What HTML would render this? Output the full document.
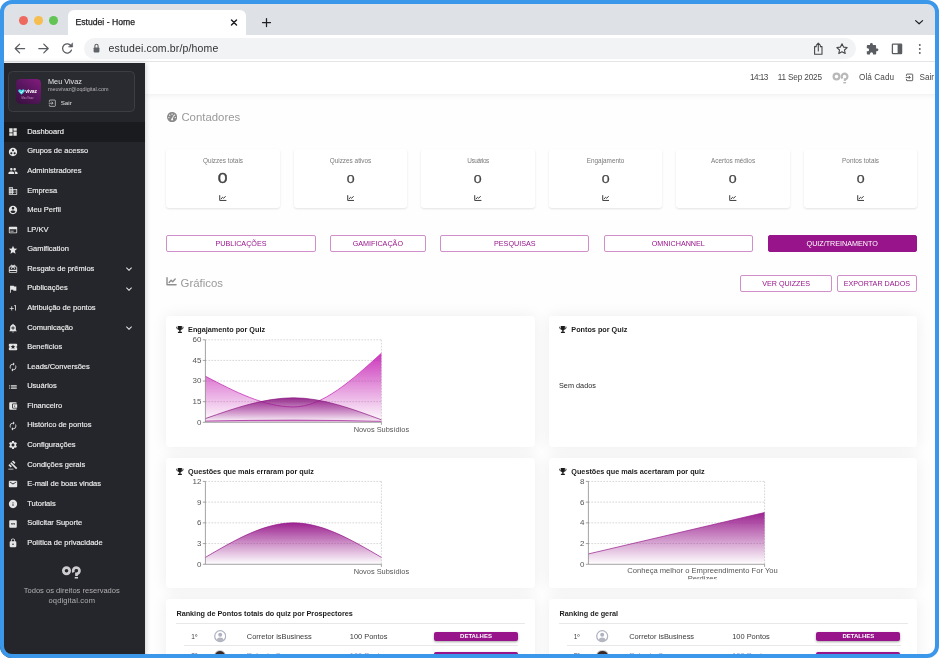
<!DOCTYPE html>
<html lang="pt-BR">
<head>
<meta charset="utf-8">
<title>Estudei - Home</title>
<style>
html,body{margin:0;padding:0;background:#fff;}
body{width:940px;height:658px;overflow:hidden;position:relative;font-family:"Liberation Sans",sans-serif;color:#333;-webkit-font-smoothing:antialiased;}
*{box-sizing:border-box;}
.abs{position:absolute;}
#clip{position:absolute;left:0;top:0;width:939px;height:658px;border-radius:12px;overflow:hidden;background:#fff;will-change:transform;}
#frame{position:absolute;left:0;top:0;width:939px;height:658px;border:4px solid #3b97e9;border-radius:12px;z-index:50;pointer-events:none;}
/* browser chrome */
#tabbar{position:absolute;left:0;top:0;width:939px;height:35px;background:#dee1e6;}
.tl{position:absolute;top:16px;width:9px;height:9px;border-radius:50%;}
#tab{position:absolute;left:68px;top:10px;width:178px;height:25px;background:#fff;border-radius:6px 6px 0 0;}
#tab .t{position:absolute;left:7.5px;top:6.6px;font-size:8.65px;color:#202124;letter-spacing:0;white-space:nowrap;-webkit-text-stroke:0.25px #202124;}
#toolbar{position:absolute;left:0;top:35px;width:939px;height:27px;background:#fff;border-bottom:1px solid #e3e5e8;}
#pill{position:absolute;left:84px;top:3px;width:772px;height:21px;border-radius:11px;background:#f1f3f4;}
#url{position:absolute;left:24.5px;top:4.4px;font-size:10.5px;color:#303134;white-space:nowrap;letter-spacing:0.15px;}
/* sidebar */
#side{position:absolute;left:0;top:63px;width:144.5px;height:600px;background:#25262b;}
#main{position:absolute;left:144.5px;top:63px;width:795px;height:600px;background:#fefefe;overflow:hidden;}
/*SIDE*/
#pcard{position:absolute;left:8px;top:8px;width:126.500px;height:41px;border:1px solid #3d3e44;border-radius:4.500px;background:#2a2b31;}
#avatar{position:absolute;left:6.500px;top:6.500px;width:25.500px;height:25.500px;border-radius:4.500px;background:linear-gradient(35deg,#3c1242 10%,#5a1660 55%,#861b80 100%);overflow:hidden;}
#avatar .vz{position:absolute;left:9.700px;top:9.300px;font-size:5px;line-height:6px;color:#fff;font-weight:bold;letter-spacing:-0.100px;}
#avatar .vz2{position:absolute;left:6px;top:18.500px;font-size:2.600px;line-height:3px;color:#d78fd0;white-space:nowrap;}
#pcard .pn{position:absolute;left:39px;top:4.500px;font-size:7.300px;line-height:9px;color:#e6e6e6;white-space:nowrap;}
#pcard .pe{position:absolute;left:39px;top:13.700px;font-size:5.450px;line-height:7px;color:#b4b4b8;white-space:nowrap;}
#pcard .ps{position:absolute;left:51.700px;top:26.600px;font-size:6.200px;line-height:8px;color:#e0e0e0;white-space:nowrap;}
.mi{position:absolute;left:4px;width:140.500px;height:19.570px;}
.mi.act{background:#1a1b1f;}
.mi .ic{position:absolute;left:3.600px;top:5.200px;}
.mi span{position:absolute;left:23.200px;top:4.900px;font-size:7.500px;line-height:9px;color:#ededed;white-space:nowrap;-webkit-text-stroke:0.150px #ededed;}
.mi .chev{position:absolute;left:118.500px;top:4.200px;}
.ft{position:absolute;left:4px;width:135.500px;text-align:center;font-size:7.550px;line-height:10px;color:#b0b0b3;white-space:nowrap;}
/*ENDSIDE*/
/*MAIN*/
#side{z-index:5;box-shadow:1px 0 5px rgba(0,0,0,0.180);}
#mi{position:absolute;left:-144.500px;top:-63px;width:940px;height:700px;}
#hdr{position:absolute;left:144.500px;top:63px;width:800px;height:30.800px;background:#fff;box-shadow:0 1px 6px rgba(0,0,0,0.070);}
.ht{position:absolute;top:72.500px;font-size:8.200px;line-height:9px;color:#484848;white-space:nowrap;}
.h2{position:absolute;font-size:11.400px;line-height:14px;color:#9a9a9a;white-space:nowrap;}
.cc{position:absolute;top:148.500px;width:113.200px;height:59.600px;background:#fff;border-radius:3px;box-shadow:0 1px 2.200px rgba(0,0,0,0.110);}
.cl{position:absolute;left:0;width:100%;top:8.200px;text-align:center;font-size:6.400px;line-height:8px;color:#7a7a7a;white-space:nowrap;}
.cv{position:absolute;left:0;width:100%;top:23.300px;text-align:center;font-size:11.600px;line-height:14px;color:#444;transform:scaleX(1.220);-webkit-text-stroke:0.250px #444;}
.cv.big{font-size:14.400px;top:22.300px;-webkit-text-stroke:0.400px #444;}
.bt{position:absolute;border:1px solid #d08fc9;border-radius:2px;background:#fff;color:#98148a;font-size:7.200px;text-align:center;line-height:15px;white-space:nowrap;}
.bt.fill{background:#98148a;border-color:#98148a;color:#fff;}
.card{position:absolute;background:#fff;border-radius:4px;box-shadow:0 0 16px rgba(0,0,0,0.072);}
.ct{position:absolute;font-size:7.250px;line-height:9px;font-weight:bold;color:#1c1c1c;white-space:nowrap;}
.sd{position:absolute;font-size:7.300px;line-height:9px;color:#2a2a2a;white-space:nowrap;}
.tk{font-size:6.800px;fill:#555;font-family:"Liberation Sans",sans-serif;}
.xl{font-size:7.400px;fill:#555;font-family:"Liberation Sans",sans-serif;}
.hr{position:absolute;height:0.800px;background:#e8e8e8;}
.rt{position:absolute;font-size:7.450px;line-height:9px;color:#3a3a3a;white-space:nowrap;}
.db{position:absolute;width:84px;height:9.200px;border-radius:2px;background:#98148a;color:#fff;font-size:6px;font-weight:bold;line-height:9.200px;text-align:center;box-shadow:0 1px 2.500px rgba(0,0,0,0.350);}
/*ENDMAIN*/
</style>
</head>
<body>
<div id="clip">
  <div id="tabbar">
    <div class="tl" style="left:18.8px;background:#ee6a5f;"></div>
    <div class="tl" style="left:33.8px;background:#f5be4f;"></div>
    <div class="tl" style="left:48.6px;background:#61c454;"></div>
    <div id="tab"><span class="t">Estudei - Home</span></div>
  </div>
  <div id="toolbar">
    <div id="pill"><span id="url">estudei.com.br/p/home</span></div>
  </div>

  <svg class="abs" style="left:0;top:0;" width="939" height="63" viewBox="0 0 939 63" fill="none" stroke="#45474a" stroke-width="1.25" stroke-linecap="round" stroke-linejoin="round">
    <!-- tab close, new tab, chevron -->
    <path d="M231.500 20.100l5 5M236.500 20.100l-5 5" stroke="#202124" stroke-width="1.450"/>
    <path d="M262.500 22.600h8M266.500 18.600v8" stroke="#202124" stroke-width="1.250"/>
    <path d="M915.6 20.6l3.5 3.2 3.5-3.2" stroke="#202124" stroke-width="1.2"/>
    <!-- back / forward -->
    <path d="M24.6 48.5H15.4M19.6 44.1l-4.4 4.400 4.400 4.400" stroke="#5a5d61"/>
    <path d="M38.800 48.500h9.200M43.800 44.100l4.400 4.400-4.400 4.400" stroke="#5a5d61"/>
    <!-- reload -->
    <path d="M71.2 46.2a4.6 4.6 0 1 0 .3 3.9" stroke="#5a5d61" stroke-width="1.3"/>
    <path d="M72.6 43.2v3.8h-3.8z" fill="#5a5d61" stroke="#5a5d61" stroke-width="0.6"/>
    <!-- lock -->
    <rect x="93.6" y="47.4" width="5.8" height="5" rx="0.8" fill="#5f6368" stroke="none"/>
    <path d="M94.9 47.4v-1.5a1.6 1.6 0 0 1 3.2 0v1.5" stroke="#5f6368" stroke-width="1.1"/>
    <!-- share -->
    <path d="M816.3 46.6h-1.7v7.6h7.4v-7.6h-1.7M818.3 51v-7.6M816.2 45.4l2.1-2.2 2.1 2.2" stroke="#45474a" stroke-width="1.1"/>
    <!-- star -->
    <path d="M842 43.8l1.55 3.3 3.6.45-2.65 2.45.7 3.55-3.2-1.8-3.2 1.8.7-3.55-2.65-2.45 3.6-.45z" stroke="#45474a" stroke-width="1.1"/>
    <!-- puzzle -->
    <path d="M876.9 48.4h-.8v-2.2c0-.6-.5-1.1-1.1-1.1h-2.2v-.8a1.4 1.4 0 0 0-2.8 0v.8h-2.1c-.6 0-1.1.5-1.1 1.1v2.1h.8a1.5 1.5 0 0 1 0 3h-.8v2.1c0 .6.5 1.1 1.1 1.1h2.1v-.8a1.5 1.5 0 0 1 3 0v.8h2.1c.6 0 1.1-.5 1.1-1.1v-2.2h.8a1.4 1.4 0 0 0 0-2.8z" fill="#5a5d61" stroke="none"/>
    <!-- side panel -->
    <rect x="892.4" y="44.2" width="9.2" height="9.4" rx="0.6" stroke="#5a5d61" stroke-width="1.3"/>
    <rect x="897.6" y="44.2" width="4" height="9.4" fill="#5a5d61" stroke="none"/>
    <!-- menu dots -->
    <g fill="#5a5d61" stroke="none"><circle cx="919.8" cy="45" r="0.95"/><circle cx="919.8" cy="49" r="0.95"/><circle cx="919.8" cy="53" r="0.95"/></g>
  </svg>
  <div id="side">
    <div id="pcard">
      <div id="avatar">
        <svg class="abs" style="left:2px;top:10.5px" width="7" height="6" viewBox="0 0 14 12"><path d="M7 11.500L1.200 5.600A3.100 3.100 0 0 1 5.600 1.300L7 2.700l1.400-1.400a3.100 3.100 0 0 1 4.400 4.300z" fill="#3fd6e6"/><path d="M4 5.200l2.500 2.600L10.700 3" stroke="#fff" stroke-width="1.600" fill="none"/></svg>
        <span class="vz">vivaz</span><span class="vz2">Meu Vivaz</span>
      </div>
      <span class="pn">Meu Vivaz</span>
      <span class="pe">meuvivaz@oqdigital.com</span>
      <svg class="abs" style="left:38.700px;top:26.500px" width="8.400" height="8.400" viewBox="0 0 24 24" fill="none" stroke="#dcdcdc" stroke-width="2"><path d="M4 8V4.500C4 3.700 4.700 3 5.500 3h14c.8 0 1.500.7 1.500 1.500v15c0 .8-.7 1.500-1.500 1.500h-14C4.700 21 4 20.300 4 19.500V16"/><path d="M2 12h12M10.500 8l4 4-4 4"/></svg>
      <span class="ps">Sair</span>
    </div>
    <div class="mi act" style="top:59.00px"><svg class="ic" width="10" height="10" viewBox="0 0 24 24" fill="#e6e6e6"><path d="M3 13h8V3H3v10zm0 8h8v-6H3v6zm10 0h8V11h-8v10zm0-18v6h8V3h-8z"/></svg><span>Dashboard</span></div>
    <div class="mi" style="top:78.57px"><svg class="ic" width="10" height="10" viewBox="0 0 24 24" fill="#e6e6e6"><path d="M12 2C6.48 2 2 6.48 2 12s4.48 10 10 10 10-4.48 10-10S17.52 2 12 2zM8 17.5c-1.38 0-2.5-1.12-2.5-2.5s1.12-2.5 2.5-2.5 2.5 1.12 2.5 2.5-1.12 2.5-2.5 2.5zM9.500 8c0-1.380 1.120-2.500 2.500-2.500s2.500 1.120 2.500 2.500-1.120 2.500-2.500 2.500S9.500 9.380 9.500 8zm6.500 9.500c-1.380 0-2.500-1.120-2.500-2.500s1.120-2.500 2.500-2.500 2.500 1.120 2.500 2.500-1.120 2.500-2.500 2.500z"/></svg><span>Grupos de acesso</span></div>
    <div class="mi" style="top:98.14px"><svg class="ic" width="10" height="10" viewBox="0 0 24 24" fill="#e6e6e6"><path d="M16 11c1.660 0 2.990-1.340 2.990-3S17.660 5 16 5c-1.660 0-3 1.340-3 3s1.340 3 3 3zm-8 0c1.660 0 2.990-1.340 2.990-3S9.660 5 8 5C6.340 5 5 6.340 5 8s1.340 3 3 3zm0 2c-2.330 0-7 1.170-7 3.500V19h14v-2.500c0-2.330-4.670-3.500-7-3.500zm8 0c-.29 0-.62.02-.97.05 1.160.84 1.970 1.970 1.970 3.450V19h6v-2.500c0-2.330-4.670-3.500-7-3.500z"/></svg><span>Administradores</span></div>
    <div class="mi" style="top:117.71px"><svg class="ic" width="10" height="10" viewBox="0 0 24 24" fill="#e6e6e6"><path d="M12 7V3H2v18h20V7H12zM6 19H4v-2h2v2zm0-4H4v-2h2v2zm0-4H4V9h2v2zm0-4H4V5h2v2zm4 12H8v-2h2v2zm0-4H8v-2h2v2zm0-4H8V9h2v2zm0-4H8V5h2v2zm10 12h-8v-2h2v-2h-2v-2h2v-2h-2V9h8v10zm-2-8h-2v2h2v-2zm0 4h-2v2h2v-2z"/></svg><span>Empresa</span></div>
    <div class="mi" style="top:137.28px"><svg class="ic" width="10" height="10" viewBox="0 0 24 24" fill="#e6e6e6"><path d="M12 2C6.48 2 2 6.48 2 12s4.48 10 10 10 10-4.48 10-10S17.52 2 12 2zm0 3c1.660 0 3 1.340 3 3s-1.340 3-3 3-3-1.340-3-3 1.340-3 3-3zm0 14.200c-2.500 0-4.710-1.280-6-3.220.03-1.990 4-3.080 6-3.080 1.990 0 5.970 1.090 6 3.080-1.290 1.940-3.500 3.220-6 3.220z"/></svg><span>Meu Perfil</span></div>
    <div class="mi" style="top:156.85px"><svg class="ic" width="10" height="10" viewBox="0 0 24 24" fill="#e6e6e6"><path d="M20 4H4c-1.100 0-2 .9-2 2v12c0 1.100.9 2 2 2h16c1.100 0 2-.9 2-2V6c0-1.100-.9-2-2-2zm0 14H4v-8h16v8zM5.500 13.800h8v2h-8z"/></svg><span>LP/KV</span></div>
    <div class="mi" style="top:176.42px"><svg class="ic" width="10" height="10" viewBox="0 0 24 24" fill="#e6e6e6"><path d="M12 17.270L18.180 21l-1.640-7.030L22 9.240l-7.190-.61L12 2 9.190 8.630 2 9.240l5.460 4.730L5.820 21z"/></svg><span>Gamification</span></div>
    <div class="mi" style="top:195.99px"><svg class="ic" width="10" height="10" viewBox="0 0 24 24" fill="#e6e6e6"><path d="M20 6h-2.180c.11-.31.18-.65.18-1 0-1.660-1.340-3-3-3-1.050 0-1.960.54-2.500 1.350l-.5.67-.5-.68C10.960 2.540 10.050 2 9 2 7.340 2 6 3.340 6 5c0 .35.07.69.18 1H4c-1.110 0-1.990.89-1.990 2L2 19c0 1.110.89 2 2 2h16c1.110 0 2-.89 2-2V8c0-1.110-.89-2-2-2zm-5-2c.55 0 1 .45 1 1s-.45 1-1 1-1-.45-1-1 .45-1 1-1zM9 4c.55 0 1 .45 1 1s-.45 1-1 1-1-.45-1-1 .45-1 1-1zm11 15H4v-2h16v2zm0-5H4V8h5.080L7 10.830 8.620 12 11 8.760l1-1.360 1 1.360L15.380 12 17 10.830 14.920 8H20v6z"/></svg><span>Resgate de prêmios</span><svg class="chev" width="12" height="12" viewBox="0 0 24 24"><path d="M16.590 8.590L12 13.170 7.410 8.590 6 10l6 6 6-6z" fill="#e4e4e4"/></svg></div>
    <div class="mi" style="top:215.56px"><svg class="ic" width="10" height="10" viewBox="0 0 24 24" fill="#e6e6e6"><path d="M14.400 6L14 4H5v17h2v-7h5.600l.4 2h7V6z"/></svg><span>Publicações</span><svg class="chev" width="12" height="12" viewBox="0 0 24 24"><path d="M16.590 8.590L12 13.170 7.410 8.590 6 10l6 6 6-6z" fill="#e4e4e4"/></svg></div>
    <div class="mi" style="top:235.13px"><svg class="ic" width="10" height="10" viewBox="0 0 24 24" fill="#e6e6e6"><path d="M10 8H8v4H4v2h4v4h2v-4h4v-2h-4zm4.500-1.920V7.900l2.500-.5V18h2V5z"/></svg><span>Atribuição de pontos</span></div>
    <div class="mi" style="top:254.70px"><svg class="ic" width="10" height="10" viewBox="0 0 24 24" fill="#e6e6e6"><path d="M10.010 21.010c0 1.100.89 1.990 1.990 1.990s1.990-.89 1.990-1.990h-3.980zm8.870-4.190V11c0-3.250-2.250-5.970-5.290-6.690v-.72C13.590 2.710 12.880 2 12 2s-1.590.71-1.590 1.590v.72C7.370 5.030 5.120 7.750 5.120 11v5.820L3 18.940V20h18v-1.060l-2.120-2.120zM16 13.010h-3v3h-2v-3H8V11h3V8h2v3h3v2.010z"/></svg><span>Comunicação</span><svg class="chev" width="12" height="12" viewBox="0 0 24 24"><path d="M16.590 8.590L12 13.170 7.410 8.590 6 10l6 6 6-6z" fill="#e4e4e4"/></svg></div>
    <div class="mi" style="top:274.27px"><svg class="ic" width="10" height="10" viewBox="0 0 24 24" fill="#e6e6e6"><path d="M20 12c0-1.100.9-2 2-2V6c0-1.100-.9-2-2-2H4c-1.100 0-1.990.9-1.990 2v4c1.100 0 1.990.9 1.990 2s-.89 2-2 2v4c0 1.100.9 2 2 2h16c1.100 0 2-.9 2-2v-4c-1.100 0-2-.9-2-2zm-4.420 4.800L12 14.500l-3.580 2.300 1.080-4.120-3.290-2.690 4.240-.25L12 5.800l1.540 3.950 4.240.25-3.290 2.690 1.090 4.110z"/></svg><span>Benefícios</span></div>
    <div class="mi" style="top:293.84px"><svg class="ic" width="10" height="10" viewBox="0 0 24 24" fill="#e6e6e6"><path d="M12 6v3l4-4-4-4v3c-4.420 0-8 3.580-8 8 0 1.570.46 3.030 1.240 4.260L6.700 14.800c-.45-.83-.7-1.790-.7-2.800 0-3.310 2.690-6 6-6zm6.760 1.740L17.300 9.200c.44.84.7 1.790.7 2.800 0 3.310-2.690 6-6 6v-3l-4 4 4 4v-3c4.420 0 8-3.580 8-8 0-1.570-.46-3.030-1.240-4.260z"/></svg><span>Leads/Conversões</span></div>
    <div class="mi" style="top:313.41px"><svg class="ic" width="10" height="10" viewBox="0 0 24 24" fill="#e6e6e6"><path d="M3 13h2v-2H3v2zm0 4h2v-2H3v2zm0-8h2V7H3v2zm4 4h14v-2H7v2zm0 4h14v-2H7v2zM7 7v2h14V7H7z"/></svg><span>Usuários</span></div>
    <div class="mi" style="top:332.98px"><svg class="ic" width="10" height="10" viewBox="0 0 24 24" fill="#e6e6e6"><path d="M21 18v1c0 1.100-.9 2-2 2H5c-1.110 0-2-.9-2-2V5c0-1.100.89-2 2-2h14c1.100 0 2 .9 2 2v1h-9c-1.110 0-2 .9-2 2v8c0 1.100.89 2 2 2h9zm-9-2h10V8H12v8zm4-2.500c-.83 0-1.500-.67-1.500-1.500s.67-1.500 1.500-1.500 1.500.67 1.500 1.500-.67 1.500-1.500 1.500z"/></svg><span>Financeiro</span></div>
    <div class="mi" style="top:352.55px"><svg class="ic" width="10" height="10" viewBox="0 0 24 24" fill="#e6e6e6"><path d="M12 6v3l4-4-4-4v3c-4.420 0-8 3.580-8 8 0 1.570.46 3.030 1.240 4.260L6.700 14.800c-.45-.83-.7-1.790-.7-2.800 0-3.310 2.690-6 6-6zm6.760 1.740L17.300 9.200c.44.84.7 1.790.7 2.800 0 3.310-2.690 6-6 6v-3l-4 4 4 4v-3c4.420 0 8-3.580 8-8 0-1.570-.46-3.030-1.240-4.260z"/></svg><span>Histórico de pontos</span></div>
    <div class="mi" style="top:372.12px"><svg class="ic" width="10" height="10" viewBox="0 0 24 24" fill="#e6e6e6"><path d="M19.140 12.940c.04-.3.06-.61.06-.94 0-.32-.02-.64-.07-.94l2.030-1.580c.18-.14.23-.41.12-.61l-1.920-3.320c-.12-.22-.37-.29-.59-.22l-2.390.96c-.5-.38-1.030-.7-1.620-.94l-.36-2.540c-.04-.24-.24-.41-.48-.41h-3.840c-.24 0-.43.17-.47.41l-.36 2.540c-.59.24-1.130.57-1.620.94l-2.390-.96c-.22-.08-.47 0-.59.22L2.740 8.870c-.12.21-.08.47.12.61l2.030 1.580c-.05.3-.09.63-.09.94s.02.64.07.94l-2.030 1.580c-.18.14-.23.41-.12.61l1.920 3.320c.12.22.37.29.59.22l2.390-.96c.5.38 1.030.7 1.620.94l.36 2.540c.05.24.24.41.48.41h3.840c.24 0 .44-.17.47-.41l.36-2.540c.59-.24 1.130-.56 1.620-.94l2.390.96c.22.08.47 0 .59-.22l1.920-3.320c.12-.22.07-.47-.12-.61l-2.010-1.580zM12 15.600c-1.980 0-3.600-1.620-3.600-3.600s1.620-3.600 3.600-3.600 3.600 1.620 3.600 3.600-1.620 3.600-3.600 3.600z"/></svg><span>Configurações</span></div>
    <div class="mi" style="top:391.69px"><svg class="ic" width="10" height="10" viewBox="0 0 24 24" fill="#e6e6e6"><path d="M1 21h12v2H1zM5.245 8.070l2.830-2.827 14.140 14.142-2.828 2.828zM12.317 1l5.657 5.656-2.830 2.830-5.654-5.660zM3.825 9.485l5.657 5.657-2.828 2.828-5.657-5.657z"/></svg><span>Condições gerais</span></div>
    <div class="mi" style="top:411.26px"><svg class="ic" width="10" height="10" viewBox="0 0 24 24" fill="#e6e6e6"><path d="M20 4H4c-1.100 0-1.990.9-1.990 2L2 18c0 1.100.9 2 2 2h16c1.100 0 2-.9 2-2V6c0-1.100-.9-2-2-2zm0 4l-8 5-8-5V6l8 5 8-5v2z"/></svg><span>E-mail de boas vindas</span></div>
    <div class="mi" style="top:430.83px"><svg class="ic" width="10" height="10" viewBox="0 0 24 24" fill="#e6e6e6"><path d="M12 2C6.480 2 2 6.480 2 12s4.480 10 10 10 10-4.480 10-10S17.520 2 12 2zm1 15h-2v-6h2v6zm0-8h-2V7h2v2z"/></svg><span>Tutoriais</span></div>
    <div class="mi" style="top:450.40px"><svg class="ic" width="10" height="10" viewBox="0 0 24 24" fill="#e6e6e6"><path d="M19 3H5c-1.100 0-2 .9-2 2v14c0 1.100.9 2 2 2h14c1.100 0 2-.9 2-2V5c0-1.100-.9-2-2-2zM11 14.500H8.500l1-2H8v-3h3v3l-1 2zm5 0h-2.500l1-2H13v-3h3v3l-1 2z"/></svg><span>Solicitar Suporte</span></div>
    <div class="mi" style="top:469.97px"><svg class="ic" width="10" height="10" viewBox="0 0 24 24" fill="#e6e6e6"><path d="M18 8h-1V6c0-2.760-2.240-5-5-5S7 3.240 7 6v2H6c-1.100 0-2 .9-2 2v10c0 1.100.9 2 2 2h12c1.100 0 2-.9 2-2V10c0-1.100-.9-2-2-2zm-6 9c-1.100 0-2-.9-2-2s.9-2 2-2 2 .9 2 2-.9 2-2 2zm3.100-9H8.900V6c0-1.710 1.390-3.100 3.100-3.100 1.710 0 3.100 1.390 3.100 3.100v2z"/></svg><span>Política de privacidade</span></div>
    <svg class="abs" style="left:58px;top:500px" width="28" height="20" viewBox="58 563 28 20" fill="none" stroke="#cdcdcf" stroke-width="2.700"><circle cx="66.500" cy="570.700" r="3.150"/><path d="M73.600 572.300A3.150 3.150 0 1 1 76.500 573.850V576" stroke-linecap="butt"/><path d="M74.700 577.750h3.300" stroke-width="1.600"/></svg>
    <div class="ft" style="top:523px">Todos os direitos reservados</div>
    <div class="ft" style="top:533px;letter-spacing:0.17px">oqdigital.com</div>
  </div>
  <div id="main"><div id="mi">
  <div id="hdr"></div>
  <span class="ht" style="left:750px;letter-spacing:-0.560px">14:13</span>
  <span class="ht" style="left:777.700px;letter-spacing:-0.150px">11 Sep 2025</span>
  <svg class="abs" style="left:831px;top:71px" width="19" height="13" viewBox="831 71 19 13" fill="none" stroke="#b9b9b9" stroke-width="2.200"><circle cx="836.500" cy="76.600" r="2.900"/><path d="M842.500 78.450A2.850 2.850 0 1 1 844.900 79.350V81" /><path d="M843.200 82.700h2.900" stroke-width="1.400"/></svg>
  <span class="ht" style="left:859px;letter-spacing:0.080px">Olá Cadu</span>
  <svg class="abs" style="left:905px;top:73.100px" width="8.800" height="8.800" viewBox="0 0 24 24" fill="none" stroke="#444" stroke-width="2.300"><path d="M4 8V4.500C4 3.700 4.700 3 5.500 3h14c.8 0 1.500.7 1.500 1.500v15c0 .8-.7 1.500-1.500 1.500h-14C4.700 21 4 20.300 4 19.500V16"/><path d="M2 12h12M10.500 8l4 4-4 4"/></svg>
  <span class="ht" style="left:919.400px;letter-spacing:0.050px">Sair</span>
  <svg class="abs" style="left:166.500px;top:112px" width="10.200" height="10.200" viewBox="0 0 20 20"><circle cx="10" cy="10" r="10" fill="#8a8a8a"/><g fill="#fbfbfb"><circle cx="10" cy="4.200" r="1.300"/><circle cx="5.300" cy="6.200" r="1.300"/><circle cx="14.700" cy="6.200" r="1.300"/><circle cx="3.700" cy="11" r="1.300"/><circle cx="16.300" cy="11" r="1.300"/><path d="M12.600 6.300l1.200.5-2.300 6.300a2 2 0 1 1-1.600-.6z"/></g></svg>
  <span class="h2" style="left:181.400px;top:110.300px">Contadores</span>
  <div class="cc" style="left:166.40px"><span class="cl">Quizzes totais</span><span class="cv big">0</span><svg class="abs" style="left:52.8px;top:46.2px" width="7.6" height="6.17" viewBox="0 0 16 13" fill="none" stroke="#3c3c3c" stroke-width="2.100" stroke-linecap="round" stroke-linejoin="round"><path d="M1.500 1.200v10.300h13.300"/><path d="M4.600 8l2.900-3.200 2.300 2.100 3.700-3.900"/></svg></div>
  <div class="cc" style="left:293.92px"><span class="cl">Quizzes ativos</span><span class="cv">0</span><svg class="abs" style="left:52.8px;top:46.2px" width="7.6" height="6.17" viewBox="0 0 16 13" fill="none" stroke="#3c3c3c" stroke-width="2.100" stroke-linecap="round" stroke-linejoin="round"><path d="M1.500 1.200v10.300h13.300"/><path d="M4.600 8l2.900-3.200 2.300 2.100 3.700-3.900"/></svg></div>
  <div class="cc" style="left:421.44px"><span class="cl" style="letter-spacing:-0.450px">Usuários</span><span class="cv">0</span><svg class="abs" style="left:52.8px;top:46.2px" width="7.6" height="6.17" viewBox="0 0 16 13" fill="none" stroke="#3c3c3c" stroke-width="2.100" stroke-linecap="round" stroke-linejoin="round"><path d="M1.500 1.200v10.300h13.300"/><path d="M4.600 8l2.900-3.200 2.300 2.100 3.700-3.900"/></svg></div>
  <div class="cc" style="left:548.96px"><span class="cl">Engajamento</span><span class="cv">0</span><svg class="abs" style="left:52.8px;top:46.2px" width="7.6" height="6.17" viewBox="0 0 16 13" fill="none" stroke="#3c3c3c" stroke-width="2.100" stroke-linecap="round" stroke-linejoin="round"><path d="M1.500 1.200v10.300h13.300"/><path d="M4.600 8l2.900-3.200 2.300 2.100 3.700-3.900"/></svg></div>
  <div class="cc" style="left:676.48px"><span class="cl">Acertos médios</span><span class="cv">0</span><svg class="abs" style="left:52.8px;top:46.2px" width="7.6" height="6.17" viewBox="0 0 16 13" fill="none" stroke="#3c3c3c" stroke-width="2.100" stroke-linecap="round" stroke-linejoin="round"><path d="M1.500 1.200v10.300h13.300"/><path d="M4.600 8l2.900-3.200 2.300 2.100 3.700-3.900"/></svg></div>
  <div class="cc" style="left:804.00px"><span class="cl">Pontos totais</span><span class="cv">0</span><svg class="abs" style="left:52.8px;top:46.2px" width="7.6" height="6.17" viewBox="0 0 16 13" fill="none" stroke="#3c3c3c" stroke-width="2.100" stroke-linecap="round" stroke-linejoin="round"><path d="M1.500 1.200v10.300h13.300"/><path d="M4.600 8l2.900-3.200 2.300 2.100 3.700-3.900"/></svg></div>
  <div class="bt" style="left:166.2px;top:235.200px;width:149.6px;height:17px">PUBLICAÇÕES</div>
  <div class="bt" style="left:330px;top:235.200px;width:95.7px;height:17px">GAMIFICAÇÃO</div>
  <div class="bt" style="left:440.2px;top:235.200px;width:149.2px;height:17px">PESQUISAS</div>
  <div class="bt" style="left:603.8px;top:235.200px;width:149.0px;height:17px">OMNICHANNEL</div>
  <div class="bt fill" style="left:767.6px;top:235.200px;width:149.3px;height:17px">QUIZ/TREINAMENTO</div>
<svg class="abs" style="left:166.1px;top:277.4px" width="10.9" height="8.86" viewBox="0 0 16 13" fill="none" stroke="#8f8f8f" stroke-width="2.100" stroke-linecap="round" stroke-linejoin="round"><path d="M1.500 1.200v10.300h13.300"/><path d="M4.600 8l2.900-3.200 2.300 2.100 3.700-3.900"/></svg>
  <span class="h2" style="left:180.600px;top:275.700px">Gráficos</span>
  <div class="bt" style="left:740px;top:275.200px;width:92.300px;height:16.400px">VER QUIZZES</div>
  <div class="bt" style="left:837px;top:275.200px;width:79.900px;height:16.400px">EXPORTAR DADOS</div>
  <div class="card" style="left:166.2px;top:316.2px;width:368.9px;height:130.800px"></div>
<svg class="abs" style="left:176.0px;top:325.9px" width="7.800" height="6.950" viewBox="0 0 18 16"><path d="M4.500 0h9v1.500h3.700v2.800c0 2-1.700 3.500-4.200 3.800-.6 1-1.500 1.700-2.600 2V13h2.300c.5 0 .9.400.9.900V16H4.400v-2.100c0-.5.400-.9.900-.9h2.300v-2.900c-1.100-.3-2-1-2.600-2C2.500 7.800.8 6.300.8 4.300V1.500h3.700zM4.500 3H2.400v1.300c0 1 .9 1.900 2.300 2.200-.1-.5-.2-1-.2-1.500zm9 0v2c0 .5-.1 1-.2 1.500 1.400-.3 2.300-1.200 2.300-2.200V3z" fill="#1a1a1a"/></svg>
  <span class="ct" style="left:188.1px;top:324.9px">Engajamento por Quiz</span>
  <div class="card" style="left:549.4px;top:316.2px;width:367.6px;height:130.800px"></div>
<svg class="abs" style="left:559.1999999999999px;top:325.9px" width="7.800" height="6.950" viewBox="0 0 18 16"><path d="M4.500 0h9v1.500h3.700v2.800c0 2-1.700 3.500-4.200 3.800-.6 1-1.500 1.700-2.600 2V13h2.300c.5 0 .9.400.9.900V16H4.400v-2.100c0-.5.400-.9.900-.9h2.300v-2.900c-1.100-.3-2-1-2.600-2C2.500 7.800.8 6.300.8 4.300V1.500h3.700zM4.500 3H2.400v1.300c0 1 .9 1.900 2.300 2.200-.1-.5-.2-1-.2-1.500zm9 0v2c0 .5-.1 1-.2 1.500 1.400-.3 2.300-1.200 2.300-2.200V3z" fill="#1a1a1a"/></svg>
  <span class="ct" style="left:571.3px;top:324.9px">Pontos por Quiz</span>
  <div class="card" style="left:166.2px;top:457.5px;width:368.9px;height:130.800px"></div>
<svg class="abs" style="left:176.0px;top:467.8px" width="7.800" height="6.950" viewBox="0 0 18 16"><path d="M4.500 0h9v1.500h3.700v2.800c0 2-1.700 3.500-4.200 3.800-.6 1-1.500 1.700-2.600 2V13h2.300c.5 0 .9.400.9.900V16H4.400v-2.100c0-.5.400-.9.900-.9h2.300v-2.900c-1.100-.3-2-1-2.600-2C2.500 7.800.8 6.300.8 4.300V1.500h3.700zM4.500 3H2.400v1.300c0 1 .9 1.900 2.300 2.200-.1-.5-.2-1-.2-1.500zm9 0v2c0 .5-.1 1-.2 1.500 1.400-.3 2.300-1.200 2.300-2.200V3z" fill="#1a1a1a"/></svg>
  <span class="ct" style="left:188.1px;top:466.8px">Questões que mais erraram por quiz</span>
  <div class="card" style="left:549.4px;top:457.5px;width:367.6px;height:130.800px"></div>
<svg class="abs" style="left:559.1999999999999px;top:467.8px" width="7.800" height="6.950" viewBox="0 0 18 16"><path d="M4.500 0h9v1.500h3.700v2.800c0 2-1.700 3.500-4.200 3.800-.6 1-1.500 1.700-2.600 2V13h2.300c.5 0 .9.400.9.900V16H4.400v-2.100c0-.5.400-.9.900-.9h2.300v-2.900c-1.100-.3-2-1-2.600-2C2.500 7.800.8 6.300.8 4.300V1.500h3.700zM4.500 3H2.400v1.300c0 1 .9 1.900 2.300 2.200-.1-.5-.2-1-.2-1.500zm9 0v2c0 .5-.1 1-.2 1.500 1.400-.3 2.300-1.200 2.300-2.200V3z" fill="#1a1a1a"/></svg>
  <span class="ct" style="left:571.3px;top:466.8px">Questões que mais acertaram por quiz</span>
  <span class="sd" style="left:559px;top:381.300px">Sem dados</span>
  <svg class="abs" style="left:0;top:0" width="940" height="598" viewBox="0 0 940 598">
    <path d="M205.4 401.68H381.4" stroke="#c6c6c6" stroke-width="0.700" stroke-dasharray="1.700 1.300"/>
    <path d="M205.4 381.05H381.4" stroke="#c6c6c6" stroke-width="0.700" stroke-dasharray="1.700 1.300"/>
    <path d="M205.4 360.43H381.4" stroke="#c6c6c6" stroke-width="0.700" stroke-dasharray="1.700 1.300"/>
    <path d="M205.4 339.80H381.4" stroke="#c6c6c6" stroke-width="0.700" stroke-dasharray="1.700 1.300"/>
    <path d="M381.4 339.8V422.3" stroke="#c6c6c6" stroke-width="0.700" stroke-dasharray="1.700 1.300"/>
    <linearGradient id="ga0" x1="0" y1="0" x2="0" y2="1"><stop offset="0" stop-color="#c41bb2" stop-opacity="0.88"/><stop offset="1" stop-color="#c41bb2" stop-opacity="0"/></linearGradient>
    <path d="M205.40 376.24C234.73 391.57 264.07 406.90 293.40 406.90C322.73 406.90 352.07 380.02 381.40 353.14L381.4 422.3L205.4 422.3Z" fill="url(#ga0)"/>
    <path d="M205.40 376.24C234.73 391.57 264.07 406.90 293.40 406.90C322.73 406.90 352.07 380.02 381.40 353.14" fill="none" stroke="#c41bb2" stroke-width="0.700"/>
    <linearGradient id="ga1" x1="0" y1="0" x2="0" y2="1"><stop offset="0" stop-color="#8d1883" stop-opacity="0.92"/><stop offset="1" stop-color="#8d1883" stop-opacity="0"/></linearGradient>
    <path d="M205.40 418.59C234.73 408.21 264.07 397.82 293.40 397.82C322.73 397.82 352.07 408.82 381.40 419.82L381.4 422.3L205.4 422.3Z" fill="url(#ga1)"/>
    <path d="M205.40 418.59C234.73 408.21 264.07 397.82 293.40 397.82C322.73 397.82 352.07 408.82 381.40 419.82" fill="none" stroke="#8d1883" stroke-width="0.700"/>
    <linearGradient id="ga2" x1="0" y1="0" x2="0" y2="1"><stop offset="0" stop-color="#a8209a" stop-opacity="0.6"/><stop offset="1" stop-color="#a8209a" stop-opacity="0"/></linearGradient>
    <path d="M205.40 421.06C234.73 420.58 264.07 420.10 293.40 420.10C322.73 420.10 352.07 420.72 381.40 421.34L381.4 422.3L205.4 422.3Z" fill="url(#ga2)"/>
    <path d="M205.40 421.06C234.73 420.58 264.07 420.10 293.40 420.10C322.73 420.10 352.07 420.72 381.40 421.34" fill="none" stroke="#a8209a" stroke-width="0.700"/>
    <path d="M205.4 339.8V422.3M205.4 422.3H381.4M381.4 422.3v2.500" stroke="#7c7c7c" stroke-width="0.700" fill="none"/>
    <path d="M202.8 422.30H205.4" stroke="#7c7c7c" stroke-width="0.700"/>
    <text transform="translate(201.50 424.70) scale(1.180 1)" text-anchor="end" class="tk">0</text>
    <path d="M202.8 401.68H205.4" stroke="#7c7c7c" stroke-width="0.700"/>
    <text transform="translate(201.50 404.07) scale(1.180 1)" text-anchor="end" class="tk">15</text>
    <path d="M202.8 381.05H205.4" stroke="#7c7c7c" stroke-width="0.700"/>
    <text transform="translate(201.50 383.45) scale(1.180 1)" text-anchor="end" class="tk">30</text>
    <path d="M202.8 360.43H205.4" stroke="#7c7c7c" stroke-width="0.700"/>
    <text transform="translate(201.50 362.82) scale(1.180 1)" text-anchor="end" class="tk">45</text>
    <path d="M202.8 339.80H205.4" stroke="#7c7c7c" stroke-width="0.700"/>
    <text transform="translate(201.50 342.20) scale(1.180 1)" text-anchor="end" class="tk">60</text>
    <text x="381.4" y="431.9" text-anchor="middle" class="xl" style="font-size:7.4px">Novos Subsídios</text>
    <path d="M205.4 543.57H381.4" stroke="#c6c6c6" stroke-width="0.700" stroke-dasharray="1.700 1.300"/>
    <path d="M205.4 522.85H381.4" stroke="#c6c6c6" stroke-width="0.700" stroke-dasharray="1.700 1.300"/>
    <path d="M205.4 502.12H381.4" stroke="#c6c6c6" stroke-width="0.700" stroke-dasharray="1.700 1.300"/>
    <path d="M205.4 481.40H381.4" stroke="#c6c6c6" stroke-width="0.700" stroke-dasharray="1.700 1.300"/>
    <path d="M381.4 481.4V564.3" stroke="#c6c6c6" stroke-width="0.700" stroke-dasharray="1.700 1.300"/>
    <linearGradient id="gb0" x1="0" y1="0" x2="0" y2="1"><stop offset="0" stop-color="#97188b" stop-opacity="0.95"/><stop offset="1" stop-color="#97188b" stop-opacity="0"/></linearGradient>
    <path d="M205.40 557.39C234.73 540.12 264.07 522.85 293.40 522.85C322.73 522.85 352.07 540.12 381.40 557.39L381.4 564.3L205.4 564.3Z" fill="url(#gb0)"/>
    <path d="M205.40 557.39C234.73 540.12 264.07 522.85 293.40 522.85C322.73 522.85 352.07 540.12 381.40 557.39" fill="none" stroke="#97188b" stroke-width="0.700"/>
    <path d="M205.4 481.4V564.3M205.4 564.3H381.4M381.4 564.3v2.500" stroke="#7c7c7c" stroke-width="0.700" fill="none"/>
    <path d="M202.8 564.30H205.4" stroke="#7c7c7c" stroke-width="0.700"/>
    <text transform="translate(201.50 566.70) scale(1.180 1)" text-anchor="end" class="tk">0</text>
    <path d="M202.8 543.57H205.4" stroke="#7c7c7c" stroke-width="0.700"/>
    <text transform="translate(201.50 545.97) scale(1.180 1)" text-anchor="end" class="tk">3</text>
    <path d="M202.8 522.85H205.4" stroke="#7c7c7c" stroke-width="0.700"/>
    <text transform="translate(201.50 525.25) scale(1.180 1)" text-anchor="end" class="tk">6</text>
    <path d="M202.8 502.12H205.4" stroke="#7c7c7c" stroke-width="0.700"/>
    <text transform="translate(201.50 504.52) scale(1.180 1)" text-anchor="end" class="tk">9</text>
    <path d="M202.8 481.40H205.4" stroke="#7c7c7c" stroke-width="0.700"/>
    <text transform="translate(201.50 483.80) scale(1.180 1)" text-anchor="end" class="tk">12</text>
    <text x="381.4" y="573.9" text-anchor="middle" class="xl" style="font-size:7.4px">Novos Subsídios</text>
    <path d="M588.4 543.57H764.6" stroke="#c6c6c6" stroke-width="0.700" stroke-dasharray="1.700 1.300"/>
    <path d="M588.4 522.85H764.6" stroke="#c6c6c6" stroke-width="0.700" stroke-dasharray="1.700 1.300"/>
    <path d="M588.4 502.12H764.6" stroke="#c6c6c6" stroke-width="0.700" stroke-dasharray="1.700 1.300"/>
    <path d="M588.4 481.40H764.6" stroke="#c6c6c6" stroke-width="0.700" stroke-dasharray="1.700 1.300"/>
    <path d="M764.6 481.4V564.3" stroke="#c6c6c6" stroke-width="0.700" stroke-dasharray="1.700 1.300"/>
    <linearGradient id="gc0" x1="0" y1="0" x2="0" y2="1"><stop offset="0" stop-color="#97188b" stop-opacity="0.95"/><stop offset="1" stop-color="#97188b" stop-opacity="0"/></linearGradient>
    <path d="M588.40 553.94L764.60 512.49L764.6 564.3L588.4 564.3Z" fill="url(#gc0)"/>
    <path d="M588.40 553.94L764.60 512.49" fill="none" stroke="#97188b" stroke-width="0.700"/>
    <path d="M588.4 481.4V564.3M588.4 564.3H764.6M764.6 564.3v2.500" stroke="#7c7c7c" stroke-width="0.700" fill="none"/>
    <path d="M585.8 564.30H588.4" stroke="#7c7c7c" stroke-width="0.700"/>
    <text transform="translate(584.50 566.70) scale(1.180 1)" text-anchor="end" class="tk">0</text>
    <path d="M585.8 543.57H588.4" stroke="#7c7c7c" stroke-width="0.700"/>
    <text transform="translate(584.50 545.97) scale(1.180 1)" text-anchor="end" class="tk">2</text>
    <path d="M585.8 522.85H588.4" stroke="#7c7c7c" stroke-width="0.700"/>
    <text transform="translate(584.50 525.25) scale(1.180 1)" text-anchor="end" class="tk">4</text>
    <path d="M585.8 502.12H588.4" stroke="#7c7c7c" stroke-width="0.700"/>
    <text transform="translate(584.50 504.52) scale(1.180 1)" text-anchor="end" class="tk">6</text>
    <path d="M585.8 481.40H588.4" stroke="#7c7c7c" stroke-width="0.700"/>
    <text transform="translate(584.50 483.80) scale(1.180 1)" text-anchor="end" class="tk">8</text>
    <text x="702.5" y="573.3" text-anchor="middle" class="xl" style="font-size:7.62px">Conheça melhor o Empreendimento For You</text><text x="702.500" y="581.400" text-anchor="middle" class="xl" style="font-size:7.600px" clip-path="url(#cpx)">Perdizes</text><clipPath id="cpx"><rect x="600" y="560" width="200" height="19.200"/></clipPath>
  </svg>
  <div class="card" style="left:166.2px;top:598.600px;width:368.9px;height:90px"></div>
  <span class="ct" style="left:176.4px;top:609.200px">Ranking de Pontos totais do quiz por Prospectores</span>
  <div class="hr" style="left:176.0px;top:623.100px;width:348.500px"></div>
  <div class="hr" style="left:183.8px;top:645.200px;width:334.200px"></div>
  <span class="rt" style="left:191.3px;top:632.0px;font-size:6.500px">1º</span>
  <svg class="abs" style="left:213.9px;top:630.4px" width="12.400" height="12.400" viewBox="0 0 24 24"><circle cx="12" cy="12" r="10.600" fill="#fff" stroke="#aeb2c2" stroke-width="2.400"/><circle cx="12" cy="9.300" r="3.900" fill="#aeb2c2"/><path d="M4.800 19.400c1.200-3.400 4-4.900 7.200-4.900s6 1.500 7.200 4.900c-1.900 2-4.400 3.100-7.200 3.100s-5.300-1.100-7.200-3.100z" fill="#b4b7c0"/></svg>
  <span class="rt" style="left:246.8px;top:632.0px">Corretor isBusiness</span>
  <span class="rt" style="left:349.8px;top:632.0px">100 Pontos</span>
  <div class="db" style="left:434.0px;top:632.3px">DETALHES</div>
  <span class="rt" style="left:191.3px;top:651.3px;font-size:6.500px">2º</span>
  <div class="abs" style="left:214.0px;top:649.7px;width:12.400px;height:12.400px;border-radius:50%;background:radial-gradient(circle at 50% 70%,#d9a98c 0 32%,#3a2a26 34%);border:0.800px solid #c9c9d2"></div>
  <span class="rt" style="left:191.3px;top:651.3px;font-size:6.500px;color:#8fa3d8">2º</span>
  <span class="rt" style="left:246.8px;top:651.3px;color:#8fa3d8">Roberta Campos</span>
  <span class="rt" style="left:349.8px;top:651.3px;color:#8fa3d8">100 Pontos</span>
  <div class="db" style="left:434.0px;top:651.6px">DETALHES</div>
  <div class="card" style="left:549.4px;top:598.600px;width:367.6px;height:90px"></div>
  <span class="ct" style="left:559.6px;top:609.200px">Ranking de geral</span>
  <div class="hr" style="left:559.2px;top:623.100px;width:348.500px"></div>
  <div class="hr" style="left:567.0px;top:645.200px;width:334.200px"></div>
  <span class="rt" style="left:573.7px;top:632.0px;font-size:6.500px">1º</span>
  <svg class="abs" style="left:596.3px;top:630.4px" width="12.400" height="12.400" viewBox="0 0 24 24"><circle cx="12" cy="12" r="10.600" fill="#fff" stroke="#aeb2c2" stroke-width="2.400"/><circle cx="12" cy="9.300" r="3.900" fill="#aeb2c2"/><path d="M4.800 19.400c1.200-3.400 4-4.900 7.200-4.900s6 1.500 7.200 4.900c-1.900 2-4.400 3.100-7.200 3.100s-5.300-1.100-7.200-3.100z" fill="#b4b7c0"/></svg>
  <span class="rt" style="left:629.2px;top:632.0px">Corretor isBusiness</span>
  <span class="rt" style="left:732.2px;top:632.0px">100 Pontos</span>
  <div class="db" style="left:816.4px;top:632.3px">DETALHES</div>
  <span class="rt" style="left:573.7px;top:651.3px;font-size:6.500px">2º</span>
  <div class="abs" style="left:596.4px;top:649.7px;width:12.400px;height:12.400px;border-radius:50%;background:radial-gradient(circle at 50% 70%,#d9a98c 0 32%,#3a2a26 34%);border:0.800px solid #c9c9d2"></div>
  <span class="rt" style="left:573.7px;top:651.3px;font-size:6.500px;color:#8fa3d8">2º</span>
  <span class="rt" style="left:629.2px;top:651.3px;color:#8fa3d8">Roberta Campos</span>
  <span class="rt" style="left:732.2px;top:651.3px;color:#8fa3d8">100 Pontos</span>
  <div class="db" style="left:816.4px;top:651.6px">DETALHES</div>
</div></div>
</div>
<div id="frame"></div>
</body>
</html>
